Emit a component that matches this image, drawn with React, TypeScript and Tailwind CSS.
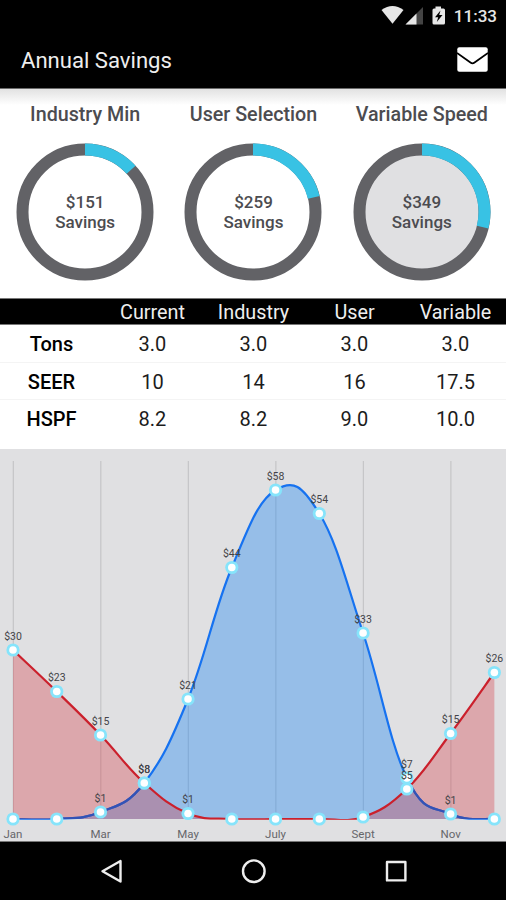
import React from "react";

const gauges = [
  { title: "Industry Min", amount: "$151", degrees: 47.5, fill: "#ffffff" },
  { title: "User Selection", amount: "$259", degrees: 76.5, fill: "#ffffff" },
  { title: "Variable Speed", amount: "$349", degrees: 104, fill: "#e0e0e2" },
];

const rows = [
  ["Tons", "3.0", "3.0", "3.0", "3.0"],
  ["SEER", "10", "14", "16", "17.5"],
  ["HSPF", "8.2", "8.2", "9.0", "10.0"],
];

type Point = { x: number; y: number };

// Coordinates are relative to the chart panel; the baseline sits at 370.
const BASE = 370;
const toPoints = (ys: number[]): Point[] => ys.map((y, i) => ({ x: 13 + 43.76 * i, y }));
const cooling = toPoints([370, 370, 363, 334, 250, 118.5, 41, 64.5, 184, 329, 365, 370]);
const heating = toPoints([201, 242.5, 286, 334, 364.5, 370, 370, 370, 368, 340, 284.5, 223.5]);
const coolingLabels = ["", "", "$1", "$8", "$21", "$44", "$58", "$54", "$33", "$7", "$1", ""];
const heatingLabels = ["$30", "$23", "$15", "$8", "$1", "", "", "", "", "$5", "$15", "$26"];
const months = ["Jan", "Mar", "May", "July", "Sept", "Nov"];

function curve(points: Point[]) {
  const at = (i: number) => points[Math.max(0, Math.min(points.length - 1, i))];
  let d = `M${points[0].x},${points[0].y}`;
  for (let i = 1; i < points.length; i++) {
    const a = at(i - 1);
    const b = at(i);
    const k = 0.2;
    const c1 = `${a.x + (b.x - at(i - 2).x) * k},${a.y + (b.y - at(i - 2).y) * k}`;
    const c2 = `${b.x - (at(i + 1).x - a.x) * k},${b.y - (at(i + 1).y - a.y) * k}`;
    d += `C${c1} ${c2} ${b.x},${b.y}`;
  }
  return d;
}

const area = (points: Point[]) =>
  `${curve(points)}L${points[points.length - 1].x},${BASE}L${points[0].x},${BASE}Z`;

function Gauge({ title, amount, degrees, fill }: (typeof gauges)[number]) {
  const rad = (degrees * Math.PI) / 180;
  const r = 62.5;
  return (
    <div className="flex flex-col items-center">
      <h2 className="h-6 text-[19.7px] leading-6 font-medium whitespace-nowrap text-[#4c4c50]">{title}</h2>
      <div className="mt-4 grid size-[138px] place-items-center">
        <svg viewBox="0 0 138 138" className="col-start-1 row-start-1 size-[138px]">
          <circle cx="69" cy="69" r={r} fill={fill} stroke="#626266" strokeWidth="12" />
          <path
            d={`M69,${69 - r}A${r},${r} 0 0 1 ${69 + r * Math.sin(rad)},${69 - r * Math.cos(rad)}`}
            fill="none"
            stroke="#38c2e4"
            strokeWidth="12"
          />
        </svg>
        <p className="col-start-1 row-start-1 text-center text-[17px] leading-5 font-medium text-[#4c4c50]">
          {amount}
          <br />
          Savings
        </p>
      </div>
    </div>
  );
}

function Markers({ points }: { points: Point[] }) {
  return (
    <g>
      {points.map((p, i) => (
        <g key={i}>
          <circle cx={p.x} cy={p.y} r="6.6" fill="#86e4fb" />
          <circle cx={p.x} cy={p.y} r="3.8" fill="#ffffff" />
        </g>
      ))}
    </g>
  );
}

function Labels({ points, labels }: { points: Point[]; labels: string[] }) {
  return (
    <g fill="#444448" fontSize="10.5" textAnchor="middle">
      {points.map((p, i) => (
        <text key={i} x={p.x} y={p.y - 10.5}>
          {labels[i]}
        </text>
      ))}
    </g>
  );
}

function Chart() {
  return (
    <svg viewBox="0 0 506 392" className="block h-[392px] w-full">
      <clipPath id="plot">
        <rect x="12" y="0" width="484" height="370.8" />
      </clipPath>
      <clipPath id="heating-area">
        <path d={area(heating)} />
      </clipPath>
      <g stroke="#c5c5c7" strokeWidth="1.2">
        {months.map((m, i) => (
          <line key={m} x1={13.3 + 87.52 * i} x2={13.3 + 87.52 * i} y1="12" y2={BASE} />
        ))}
      </g>
      <g clipPath="url(#plot)" fill="none" strokeWidth="2.2">
        <path d={area(cooling)} fill="#1c86f2" fillOpacity="0.38" stroke="none" />
        <path d={curve(cooling)} stroke="#1672f0" />
        <path d={area(heating)} fill="#d43440" fillOpacity="0.33" stroke="none" />
        <path d={curve(cooling)} stroke="#3253b6" clipPath="url(#heating-area)" />
        <path d={curve(heating)} stroke="#cb202c" />
      </g>
      <Markers points={cooling} />
      <Markers points={heating} />
      <Labels points={cooling} labels={coolingLabels} />
      <Labels points={heating} labels={heatingLabels} />
      <g fill="#66666a" fontSize="11.5" textAnchor="middle">
        {months.map((m, i) => (
          <text key={m} x={13 + 87.52 * i} y="388.5">
            {m}
          </text>
        ))}
      </g>
    </svg>
  );
}

function StatusBar() {
  return (
    <div className="flex h-8 items-center justify-end pr-[9px] text-[#e6e6e6]">
      <svg viewBox="0 0 66 22" className="h-[22px] w-[66px]">
        <path d="M0.5 5Q11.5 -3 22.5 5L11.5 18.8Z" fill="#e6e6e6" />
        <path d="M42 2V19.5H24.5Z" fill="#444444" />
        <path d="M35.5 8.5V19.5H24.5Z" fill="#e6e6e6" />
        <path d="M54.5 1.5H60V3.5H62.5Q64 3.5 64 5V18Q64 19.5 62.5 19.5H53Q51.5 19.5 51.5 18V5Q51.5 3.5 53 3.5H54.5Z" fill="#e6e6e6" />
        <path d="M59.5 5.5L54 12.2H57.2L55.8 17L61.5 10H58.2Z" fill="#000000" />
      </svg>
      <span className="ml-[7px] text-[17px] leading-8 font-medium">11:33</span>
    </div>
  );
}

export default function App() {
  return (
    <div className="flex h-[900px] w-[506px] flex-col overflow-hidden bg-white font-['Roboto','Liberation_Sans',sans-serif]">
      <header className="h-[89px] border-b border-[#6b6b6b] bg-black">
        <StatusBar />
        <div className="flex h-14 items-center justify-between pr-[18px] pl-[21px]">
          <h1 className="text-[22.1px] leading-8 text-[#eeeeee]">Annual Savings</h1>
          <svg viewBox="0 0 31 25" className="mb-px h-[25px] w-[31px]">
            <rect x="0.3" y="0.3" width="30.4" height="24.4" rx="2" fill="#ffffff" />
            <path d="M0 6L13.8 15.8Q15.5 17 17.2 15.8L31 6" fill="none" stroke="#000000" strokeWidth="1.8" />
          </svg>
        </div>
      </header>

      <section className="grid h-[209px] grid-cols-3 bg-linear-to-b from-[#e2e2e2] to-white to-[16px] pt-[14px] pl-px">
        {gauges.map((g) => (
          <Gauge key={g.title} {...g} />
        ))}
      </section>

      <section className="h-[151px]">
        <div className="grid h-[27px] grid-cols-5 border-y border-[#777777] bg-black pl-px text-center text-[19.8px] leading-[27px] text-[#eeeeee]">
          <span />
          <span>Current</span>
          <span>Industry</span>
          <span>User</span>
          <span>Variable</span>
        </div>
        {rows.map(([name, ...values]) => (
          <div
            key={name}
            className="grid h-[37.6px] grid-cols-5 border-b border-[#f4f4f4] pl-px text-center text-[20px] leading-[38px] text-[#1c1c1c] last:border-transparent"
          >
            <span className="font-medium text-black">{name}</span>
            {values.map((v, i) => (
              <span key={i}>{v}</span>
            ))}
          </div>
        ))}
      </section>

      <section className="h-[393px] border-b border-[#777777] bg-[#e0e0e2]">
        <Chart />
      </section>

      <nav className="h-[58px] bg-black">
        <svg viewBox="0 0 506 58" className="block h-[58px] w-full" fill="none" stroke="#eeeeee" strokeWidth="2.4" strokeLinejoin="round">
          <path d="M102.5 29.2L120.5 19V39.5Z" />
          <circle cx="253.8" cy="29.2" r="10.8" />
          <rect x="387" y="20" width="18.4" height="18.4" />
        </svg>
      </nav>
    </div>
  );
}
